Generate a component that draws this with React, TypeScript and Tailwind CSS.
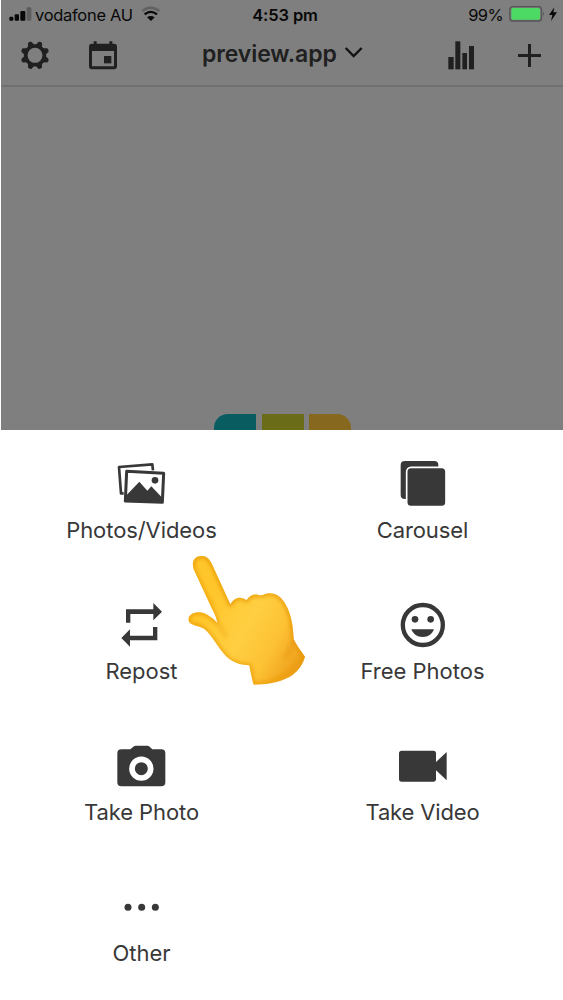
import React from "react";

type ActionProps = { label: string; spacing: string; children: React.ReactNode };

function Action({ label, spacing, children }: ActionProps) {
  return (
    <button className="flex h-[141px] flex-col items-center pt-6 text-[#383838]">
      {children}
      <span className={`mt-px whitespace-nowrap text-[22px] leading-[30px] ${spacing}`}>{label}</span>
    </button>
  );
}

function StatusBar() {
  return (
    <div className="flex h-7 items-center text-[17px] leading-7 text-[#080808]">
      <div className="flex w-[190px] items-center">
        <svg className="ml-[7px] h-7 w-[26px]" viewBox="24 0 78 84">
          <g fill="#080808">
            <rect x="28" y="50" width="12" height="12" rx="3" />
            <rect x="44" y="43" width="13" height="19" rx="3" />
            <rect x="61" y="33" width="15" height="29" rx="3" />
          </g>
          <rect x="80" y="22" width="14" height="40" rx="3" fill="#5d5d5d" />
        </svg>
        <span className="ml-[1px] w-[98px] whitespace-nowrap pt-px text-[16.5px] tracking-[-0.3px]">vodafone AU</span>
        <svg className="ml-[8px] h-7 w-5" viewBox="423 0 60 84" fill="none">
          <path d="M427 33Q452 13 478 33" stroke="#626262" strokeWidth="8" />
          <path d="M434 43Q452 28 471 43" stroke="#080808" strokeWidth="7" />
          <path d="M441 52Q452 44 464 52L453 63Z" fill="#080808" />
        </svg>
      </div>
      <span className="w-[188px] pt-px text-center text-[16.5px] font-semibold tracking-[-0.1px]">4:53 pm</span>
      <div className="flex flex-1 items-center justify-end">
        <span className="whitespace-nowrap pt-px text-[16.5px] tracking-[-0.6px]">99%</span>
        <svg className="ml-[5px] h-7 w-[55px]" viewBox="234 0 165 84">
          <rect x="239.500" y="20" width="95" height="43" rx="9" fill="none" stroke="#555" strokeWidth="4" />
          <rect x="244" y="24" width="86" height="35" rx="5" fill="#4cd964" />
          <path d="M339 35Q344 41 339 48Z" fill="#444" />
          <path d="M373 22L357 45H367L363 63L381 37H370Z" fill="#080808" />
        </svg>
      </div>
    </div>
  );
}

function NavBar() {
  return (
    <div className="flex h-[59px] items-center border-b-2 border-[#707070] text-[#202020]">
      <svg className="ml-[19px] h-[57px] w-[30px]" viewBox="60 84 90 171">
        <g fill="#202020">
          <circle cx="105" cy="166" r="28" fill="none" stroke="#202020" strokeWidth="11" />
          {[22.5, 67.5, 112.5, 157.5, 202.5, 247.5, 292.5, 337.5].map((a) => (
            <path key={a} d="M94 138L99.500 124Q105 121 110.500 124L116 138Z" transform={`rotate(${a} 105 166)`} />
          ))}
        </g>
      </svg>
      <svg className="ml-[37px] h-[57px] w-8" viewBox="261 84 96 171">
        <path
          fillRule="evenodd"
          fill="#202020"
          d="M281 124H290V131H328V124H337V131H342Q351 131 351 140V199Q351 208 342 208H276Q267 208 267 199V140Q267 131 276 131H281ZM276 153V199H342V153Z"
        />
        <rect x="312" y="168" width="22" height="22" fill="#202020" />
      </svg>
      <div className="ml-[83px] flex h-[57px] w-[167px] items-center">
        <span className="w-[137px] whitespace-nowrap pb-[6px] text-[23px] font-semibold leading-8 tracking-[-0.1px]">preview.app</span>
        <svg className="ml-[4px] h-[57px] w-[22px]" viewBox="459 84 66 171">
          <path d="M467 144L491 168L515 144" fill="none" stroke="#111" strokeWidth="7" />
        </svg>
      </div>
      <svg className="ml-[77px] h-[57px] w-[34px]" viewBox="48 84 102 171">
        <g fill="#202020">
          <rect x="55" y="171" width="16" height="37" />
          <rect x="76" y="124" width="15" height="84" />
          <rect x="97" y="159" width="14" height="49" />
          <rect x="117" y="138" width="15" height="70" />
        </g>
      </svg>
      <svg className="ml-[34px] h-[57px] w-8" viewBox="252 84 96 171">
        <path d="M264 166.500H333M298.500 132V201" stroke="#202020" strokeWidth="9" />
      </svg>
    </div>
  );
}

function PointingHand() {
  return (
    <svg className="pointer-events-none absolute left-[170px] top-[540px] h-40 w-[150px]" viewBox="0 0 450 480">
      <defs>
        <linearGradient id="skin" gradientUnits="userSpaceOnUse" x1="110" y1="200" x2="400" y2="360">
          <stop offset="0" stopColor="#ffc62b" />
          <stop offset="0.4" stopColor="#ffcf42" />
          <stop offset="0.7" stopColor="#fdc134" />
          <stop offset="1" stopColor="#ec9d1a" />
        </linearGradient>
        <filter id="soften" x="-20%" y="-20%" width="140%" height="140%">
          <feGaussianBlur stdDeviation="6" />
        </filter>
        <clipPath id="handShape">
          <path d="M71 88C63 62 76 48 94 48C111 48 119 58 126 73L181 193C190 178 199 173 211 173Q221 173 230 181C237 167 248 162 264 164Q275 168 283 163C306 155 327 164 341 184C359 210 369 245 371 298Q382 320 405 350Q397 382 367 406C338 425 299 434 251 434Q245 416 238 376C208 375 183 366 163 343C143 320 125 284 102 266C87 256 56 257 55 239C55 224 72 216 91 217Q115 220 142 249Q140 232 126 206Z" />
        </clipPath>
      </defs>
      <g clipPath="url(#handShape)">
        <rect x="45" y="40" width="370" height="400" fill="url(#skin)" />
        <g fill="none" filter="url(#soften)">
          <path d="M71 88C63 62 76 48 94 48C111 48 119 58 126 73L181 193C190 178 199 173 211 173Q221 173 230 181C237 167 248 162 264 164Q275 168 283 163C306 155 327 164 341 184C359 210 369 245 371 298Q382 320 405 350" stroke="#e69508" strokeWidth="10" />
          <path d="M71 88L126 206L142 249Q115 220 91 217Q55 216 55 239Q56 257 87 256C115 270 143 320 163 343Q190 376 238 376L251 434Q338 434 405 350" stroke="#ea9a0c" strokeWidth="9" />
          <path d="M142 248Q158 270 169 291" stroke="#f0a719" strokeWidth="6" />
          <path d="M371 298Q363 332 344 353" stroke="#ea9918" strokeWidth="9" />
        </g>
      </g>
    </svg>
  );
}

export default function App() {
  return (
    <main className="relative h-[1000px] w-[563px] overflow-hidden bg-white font-[Inter,sans-serif]">
      <div className="flex h-[430px] flex-col border-l border-white bg-[#7f7f7f]">
        <StatusBar />
        <NavBar />
        <div className="flex flex-1 items-end overflow-hidden pl-[213px]">
          <div className="flex h-4">
            <div className="w-[42px] rounded-tl-[14px] bg-[#095c60]" />
            <div className="ml-1.5 w-[42px] bg-[#6a6c18]" />
            <div className="ml-[5px] w-[42px] rounded-tr-[14px] bg-[#86691f]" />
          </div>
        </div>
      </div>
      <div className="grid grid-cols-[282px_281px]">
        <Action label="Photos/Videos" spacing="pl-px tracking-[-0.08px]">
          <svg className="h-[60px] w-[60px]" viewBox="183 12 180 180" fill="currentColor">
            <path d="M221 130L213 130L207 51L307 43L309 61" fill="none" stroke="currentColor" strokeWidth="8" strokeLinejoin="round" />
            <path d="M230 64L341 70L337 157L226 153Z" fill="none" stroke="currentColor" strokeWidth="9" strokeLinejoin="round" />
            <path d="M228 137L268 95L292 122L304 109L338 145L337 157L226 153Z" />
            <circle cx="315" cy="91" r="10" />
          </svg>
        </Action>
        <Action label="Carousel" spacing="tracking-[-0.1px]">
          <svg className="h-[60px] w-[61px]" viewBox="126 12 183 180" fill="currentColor">
            <rect x="152" y="33" width="113" height="114" rx="12" />
            <rect x="170" y="52" width="118" height="118" rx="13" stroke="white" strokeWidth="5" />
          </svg>
        </Action>
        <Action label="Repost" spacing="pl-px tracking-normal">
          <svg className="h-[60px] w-[60px]" viewBox="63 15 180 180" fill="currentColor">
            <path d="M108 98V58H190V39L216 65L190 91V72H121V98Z" />
            <path d="M202 111V151H120V170L94 144L120 118V137H189V111Z" />
          </svg>
        </Action>
        <Action label="Free Photos" spacing="tracking-normal">
          <svg className="h-[60px] w-[61px]" viewBox="126 15 183 180" fill="currentColor">
            <circle cx="218.500" cy="105" r="60" fill="none" stroke="currentColor" strokeWidth="13" />
            <circle cx="195" cy="88" r="10" />
            <circle cx="242" cy="88" r="10" />
            <path d="M184 118H252C246 133 235 141 218 141S190 133 184 118Z" />
          </svg>
        </Action>
        <Action label="Take Photo" spacing="pl-px tracking-[-0.1px]">
          <svg className="h-[60px] w-[60px]" viewBox="123 18 180 180" fill="currentColor">
            <path d="M154 58H181L190 50Q193 47 197 47H232Q236 47 239 50L247 58H274Q286 58 286 70V157Q286 169 274 169H154Q142 169 142 157V70Q142 58 154 58Z" />
            <circle cx="214" cy="116" r="28" stroke="white" strokeWidth="17" />
          </svg>
        </Action>
        <Action label="Take Video" spacing="tracking-[-0.15px]">
          <svg className="h-[60px] w-[61px]" viewBox="126 18 183 180" fill="currentColor">
            <path d="M155 62H250Q258 62 258 70V96L290 66V151L258 121V147Q258 155 250 155H155Q147 155 147 147V70Q147 62 155 62Z" />
          </svg>
        </Action>
        <Action label="Other" spacing="pl-px tracking-normal">
          <svg className="h-[60px] w-[60px]" viewBox="63 -39 180 180" fill="currentColor">
            <circle cx="114" cy="52" r="10.500" />
            <circle cx="155" cy="52" r="10.500" />
            <circle cx="196" cy="52" r="10.500" />
          </svg>
        </Action>
      </div>
      <PointingHand />
    </main>
  );
}
